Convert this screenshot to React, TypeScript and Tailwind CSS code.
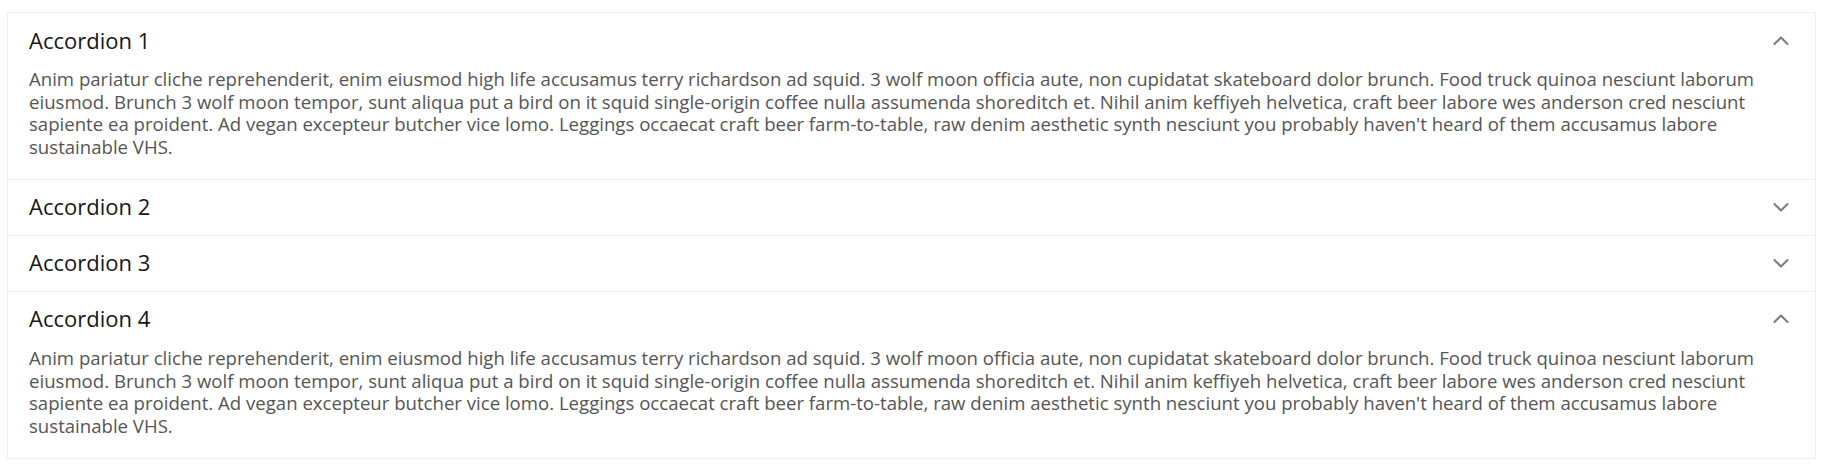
const BODY =
  "Anim pariatur cliche reprehenderit, enim eiusmod high life accusamus terry richardson ad squid. 3 wolf moon officia aute, non cupidatat skateboard dolor brunch. Food truck quinoa nesciunt laborum eiusmod. Brunch 3 wolf moon tempor, sunt aliqua put a bird on it squid single-origin coffee nulla assumenda shoreditch et. Nihil anim keffiyeh helvetica, craft beer labore wes anderson cred nesciunt sapiente ea proident. Ad vegan excepteur butcher vice lomo. Leggings occaecat craft beer farm-to-table, raw denim aesthetic synth nesciunt you probably haven't heard of them accusamus labore sustainable VHS.";

const ITEMS = [
  { title: "Accordion 1", open: true },
  { title: "Accordion 2", open: false },
  { title: "Accordion 3", open: false },
  { title: "Accordion 4", open: true },
];

function Chevron({ up }: { up: boolean }) {
  return (
    <svg width="20" height="20" viewBox="0 0 20 20" fill="none" className="shrink-0">
      <polyline
        points={up ? "3.5,13 10,6.5 16.5,13" : "3.5,7 10,13.5 16.5,7"}
        stroke="#7a7a7a"
        strokeWidth="2"
        strokeLinecap="round"
        strokeLinejoin="round"
      />
    </svg>
  );
}

export default function App() {
  return (
    <div className="min-h-[471px] bg-white pt-[12px] pl-[7px] font-['Open_Sans',sans-serif]">
      <div className="w-[1809px] border border-[#efefef]">
        {ITEMS.map((item, i) => (
          <div key={item.title} className={i > 0 ? "border-t border-[#efefef]" : ""}>
            <div className="flex h-[55px] items-center justify-between pl-[21px] pr-[24px]">
              <span className="mb-[2px] text-[22px] leading-none text-[#161616]">{item.title}</span>
              <Chevron up={item.open} />
            </div>
            {item.open && (
              <div className="px-[21px] pb-[20px] text-[18.6px] leading-[22.7px] text-[#555]">{BODY}</div>
            )}
          </div>
        ))}
      </div>
    </div>
  );
}
